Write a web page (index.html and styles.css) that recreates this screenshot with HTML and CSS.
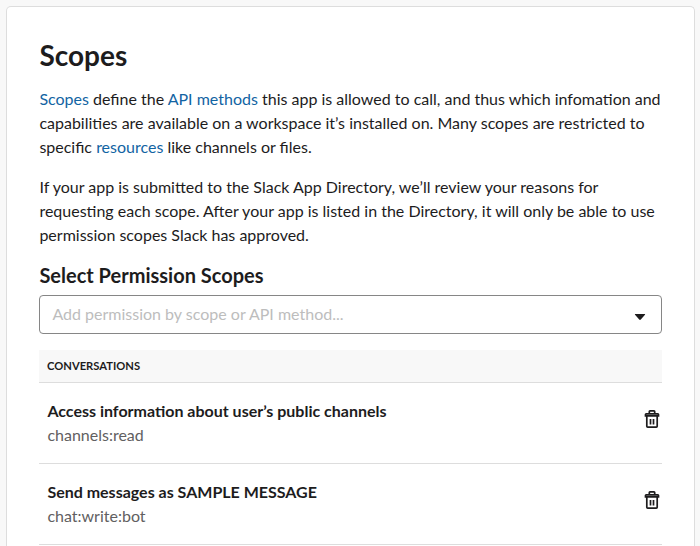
FILE: index.html
```html
<!DOCTYPE html>
<html lang="en">
<head>
<meta charset="utf-8">
<title>Scopes</title>
<link rel="stylesheet" href="styles.css">
</head>
<body>
<main class="card">
  <h1>Scopes</h1>
  <p><a>Scopes</a> define the <a>API methods</a> this app is allowed to call, and thus which infomation and<br>capabilities are available on a workspace it’s installed on. Many scopes are restricted to<br>specific <a>resources</a> like channels or files.</p>
  <p>If your app is submitted to the Slack App Directory, we’ll review your reasons for<br>requesting each scope. After your app is listed in the Directory, it will only be able to use<br>permission scopes Slack has approved.</p>
  <h2>Select Permission Scopes</h2>
  <div class="select"><span>Add permission by scope or API method...</span>
    <svg class="caret" width="12" height="8" viewBox="0 0 12 8"><path d="M1.400 1h9.200q1 0 .4.800L6.800 6.600q-.8.800-1.600 0L1 1.800Q.4 1 1.400 1z"/></svg>
  </div>
  <div class="group">CONVERSATIONS</div>
  <div class="row">
    <div><strong>Access information about user’s public channels</strong><span class="scope">channels:read</span></div>
    <svg class="trash" width="16" height="18" viewBox="0 0 16 18"><path d="M5.300 3.500V1.600q0-.7.700-.7h4q.7 0 .7.700v1.900M2.200 3.900h11.600q.7 0 .7.700v1.300h-13V4.600q0-.7.700-.7zM2.800 5.900v10.300q0 .9.900.9h8.600q.9 0 .9-.9V5.900M6.500 9v5.500M9.500 9v5.500"/></svg>
  </div>
  <div class="row">
    <div><strong>Send messages as SAMPLE MESSAGE</strong><span class="scope">chat:write:bot</span></div>
    <svg class="trash" width="16" height="18" viewBox="0 0 16 18"><path d="M5.300 3.500V1.600q0-.7.700-.7h4q.7 0 .7.700v1.900M2.200 3.900h11.600q.7 0 .7.700v1.300h-13V4.600q0-.7.700-.7zM2.800 5.900v10.300q0 .9.900.9h8.600q.9 0 .9-.9V5.900M6.500 9v5.500M9.500 9v5.500"/></svg>
  </div>
</main>
</body>
</html>
```
FILE: styles.css
```css
* { box-sizing: border-box; }
body {
  display: flow-root;
  margin: 0;
  background: #f8f8f8;
  color: #1d1c1d;
  font: 16px/24px Lato, sans-serif;
}
.card {
  display: flow-root;
  width: 689px;
  height: 540px;
  margin: 6px 0 0 6px;
  padding: 30px 32px 0;
  background: #fff;
  border: 1px solid #ddd;
  border-bottom: 0;
  border-radius: 5px 5px 0 0;
}
h1 { margin: 0 0 14px; font-size: 28px; line-height: 36px; font-weight: 700; }
h1, h2, p { padding-left: 0.4px; }
p { margin: 0 0 16px; white-space: nowrap; }
a { color: #1264a3; }
h2 { margin: 0 0 8px; font-size: 20px; line-height: 24px; font-weight: 700; }
.select {
  display: flex;
  align-items: center;
  justify-content: space-between;
  height: 39px;
  padding: 0 15px 2px 12.4px;
  border: 1px solid #868686;
  border-radius: 4px;
  color: #bdbdbd;
}
.caret { margin-top: 7px; fill: #1d1c1d; }
.group {
  height: 33px;
  margin-top: 16px;
  padding-left: 8px;
  background: #f8f8f8;
  border-bottom: 1px solid #ddd;
  font-size: 11.2px;
  font-weight: 700;
  line-height: 32px;
}
.row {
  display: flex;
  justify-content: space-between;
  height: 81px;
  padding: 16px 2px 0 8.4px;
  border-bottom: 1px solid #ddd;
}
.row strong, .scope { display: block; }
.scope { color: #616061; }
.trash { margin-top: 11px; fill: none; stroke: #1d1c1d; stroke-width: 1.7; }
```
